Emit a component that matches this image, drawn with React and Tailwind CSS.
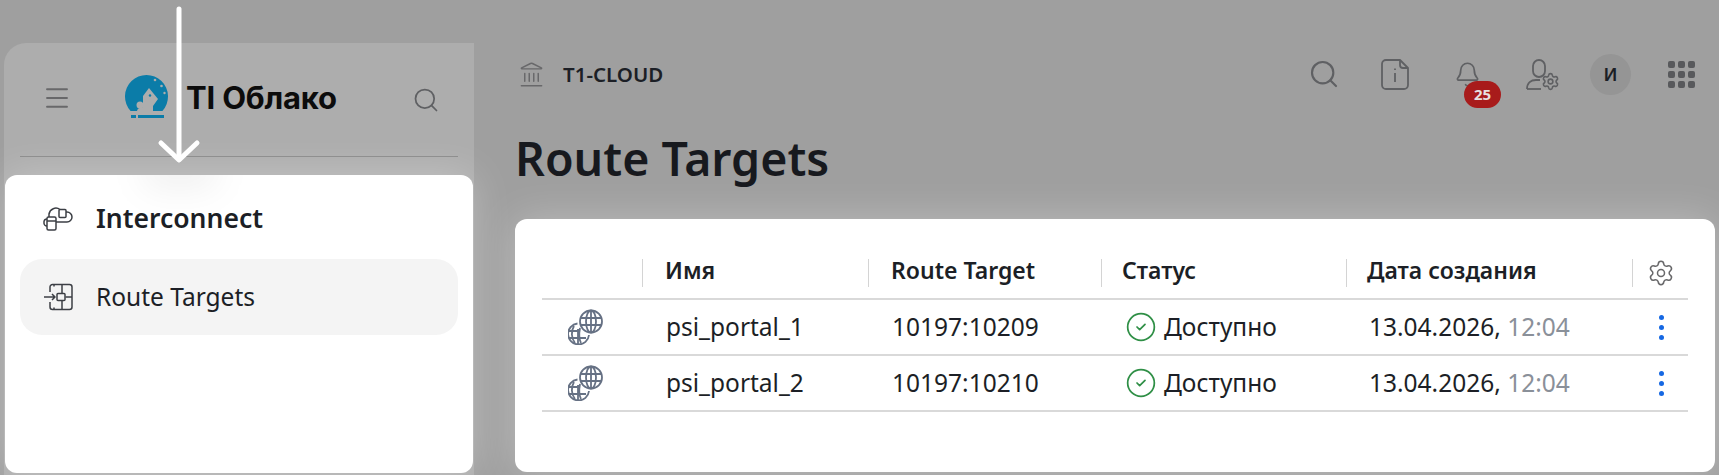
import { Menu, Search, Landmark, Bell, Settings, CircleCheck } from 'lucide-react'

const columns = ['Имя', 'Route Target', 'Статус', 'Дата создания']
const headerPad = ['pl-[22px]', 'pl-[22px]', 'pl-[20px]', 'pl-[20px]']

const rows = [
  { name: 'psi_portal_1', target: '10197:10209' },
  { name: 'psi_portal_2', target: '10197:10210' },
]

const gridCols = 'grid grid-cols-[100px_226px_233px_245px_286px_56px]'

function Logo() {
  return (
    <svg width="44" height="46" viewBox="0 0 44 46">
      <path d="M5.600 36A21.500 21.500 0 1 1 37.400 36Z" fill="#0b7ca8" />
      <path d="M12 36Q12 33 18 32L18 21 24 13 33 24 28 31 28 36Z" fill="#adadad" />
      <circle cx="15" cy="30" r="3.500" fill="#adadad" />
      <circle cx="25" cy="20.500" r="1.200" fill="#0b7ca8" />
      <circle cx="30" cy="5" r="1.300" fill="#adadad" />
      <circle cx="36.500" cy="11" r="1.300" fill="#adadad" />
      <circle cx="39.500" cy="18" r="1.200" fill="#adadad" />
      <rect x="6" y="40" width="5" height="3" fill="#0b7ca8" />
      <rect x="13" y="40" width="26" height="3" fill="#0b7ca8" />
    </svg>
  )
}

function InterconnectIcon() {
  return (
    <svg width="30" height="28" viewBox="0 0 30 28" fill="none" stroke="#3c3f45" strokeWidth="1.500" strokeLinejoin="round">
      <path d="M6 12V9a7 7 0 0 1 11-4.500" />
      <path d="M23 7h1a5 5 0 0 1 0 10H13" />
      <rect x="16" y="4.500" width="7" height="8" rx="1" />
      <rect x="4" y="12" width="9" height="13" rx="1.500" />
      <path d="M4 16h9" />
      <path d="M4 14a3 3 0 0 0-3 2.500v2A3 3 0 0 0 4 21" />
    </svg>
  )
}

function RouteIcon() {
  return (
    <svg width="30" height="28" viewBox="0 0 30 28" fill="none" stroke="#3c3f45" strokeWidth="1.500" strokeLinejoin="round">
      <path d="M7 9V4a2.500 2.500 0 0 1 2.500-2.500h17A2.500 2.500 0 0 1 29 4v20a2.500 2.500 0 0 1-2.500 2.500h-17A2.500 2.500 0 0 1 7 24v-5" />
      <path d="M19 2v8.500M19 17.500V26M22.500 14H29M11 1.500v2M11 24.500v2" />
      <rect x="14" y="10.500" width="8" height="7" rx="1" />
      <path d="M1 14h11M9 11l3 3-3 3" />
    </svg>
  )
}

function Globes() {
  return (
    <svg width="36" height="36" viewBox="0 0 36 36" fill="none" stroke="#667184" strokeWidth="1.800">
      <circle cx="23" cy="12.500" r="11" />
      <ellipse cx="23" cy="12.500" rx="5" ry="11" />
      <path d="M12.500 9h21M12.500 16h21M23 1.500v22" />
      <path d="M9.500 14.500a10.500 10.500 0 1 0 11.500 11.500" />
      <path d="M6 17c-3 5-3 12 1 17M12 19c-1 5-1 11 1 15M1 22h9M1 29h17M10 20v15" />
    </svg>
  )
}

function DocInfo() {
  return (
    <svg width="28" height="31" viewBox="0 0 28 31" fill="none" stroke="#5f6063" strokeWidth="1.800" strokeLinejoin="round">
      <path d="M5 1h14l8 8v17a4 4 0 0 1-4 4H5a4 4 0 0 1-4-4V5a4 4 0 0 1 4-4Z" />
      <path d="M19 1v5a3 3 0 0 0 3 3h5" />
      <path d="M14 14v9" />
      <path d="M14 9.500v1.500" />
    </svg>
  )
}

function UserGear() {
  return (
    <div className="relative w-[32px] h-[31px]">
      <svg width="32" height="31" viewBox="0 0 32 31" fill="none" stroke="#5f6063" strokeWidth="1.800">
        <rect x="7" y="1" width="12" height="17" rx="6" />
        <path d="M1 30c0-6 4-9 9-9h4" />
        <path d="M1 30h14" />
      </svg>
      <Settings size={19} strokeWidth={2} className="absolute right-[-2px] bottom-[-1px] text-[#5f6063]" />
    </div>
  )
}

function AppsGrid() {
  return (
    <div className="grid grid-cols-3 gap-[3px]">
      {Array.from({ length: 9 }).map((_, i) => (
        <div key={i} className="w-[7px] h-[7px] rounded-[2px] bg-[#58595c]" />
      ))}
    </div>
  )
}

function Dots() {
  return (
    <div className="flex flex-col gap-[5px]">
      <div className="w-[5px] h-[5px] rounded-full bg-[#1668e3]" />
      <div className="w-[5px] h-[5px] rounded-full bg-[#1668e3]" />
      <div className="w-[5px] h-[5px] rounded-full bg-[#1668e3]" />
    </div>
  )
}

export default function App() {
  return (
    <div className="relative flex w-[1719px] h-[475px] overflow-hidden bg-[#9f9f9f] font-['Noto_Sans',sans-serif] text-[#1c1f26]">
      {/* Sidebar */}
      <aside className="ml-[4px] mt-[43px] w-[470px] h-[432px] shrink-0 rounded-tl-[22px] bg-[#adadad] flex flex-col">
        <div className="mx-[16px] h-[114px] shrink-0 border-b border-[#8a8a8a] flex items-center">
          <Menu size={30} strokeWidth={1.500} className="ml-[22px] text-[#68686a] -mt-[3px]" />
          <div className="ml-[53px] flex items-center gap-[17px] -mt-[4px]">
            <Logo />
            <span className="font-['Inter',sans-serif] font-bold text-[31px] leading-none text-[#0c0c0c] tracking-[-0.2px]">TI Облако</span>
          </div>
          <Search size={28} strokeWidth={1.500} className="ml-[75px] text-[#5f6063]" />
        </div>

        <div className="relative mt-[18px] ml-[1px] mr-[1px] h-[298px] overflow-hidden rounded-[12px] bg-white shadow-[0_0_40px_rgba(255,255,255,0.3)] px-[15px]">
          <div className="absolute left-[135px] top-[-24px] w-[80px] h-[40px] rounded-full bg-black/5 blur-lg" />
          <div className="flex items-center h-[87px] pl-[23px] gap-[23px]">
            <InterconnectIcon />
            <span className="text-[26.500px] font-semibold leading-none">Interconnect</span>
          </div>
          <div className="flex items-center h-[76px] -mt-[3px] rounded-[22px] bg-[#f4f4f4] pl-[23px] gap-[23px]">
            <RouteIcon />
            <span className="text-[24.500px] leading-none">Route Targets</span>
          </div>
        </div>
      </aside>

      {/* Main */}
      <main className="flex-1 min-w-0 pl-[41px] pr-[4px]">
        <header className="mt-[54px] h-[40px] flex items-center">
          <Landmark size={27} strokeWidth={1.300} className="ml-[3px] text-[#68686a]" />
          <span className="ml-[18px] text-[20.500px] font-semibold leading-none">T1-CLOUD</span>
          <div className="ml-auto flex items-center">
            <Search size={32} strokeWidth={1.600} className="text-[#5f6063]" />
            <div className="ml-[41px]"><DocInfo /></div>
            <div className="relative ml-[45px] mr-[45px]">
              <Bell size={27} strokeWidth={1.500} className="text-[#5f6063]" />
              <span className="absolute left-[10px] top-[20px] w-[37px] h-[27px] rounded-full bg-[#a81b1b] text-[#e8e0e0] text-[15px] font-bold leading-none flex items-center justify-center">25</span>
            </div>
            <UserGear />
            <div className="ml-[32px] w-[41px] h-[41px] rounded-full bg-[#959595] flex items-center justify-center text-[18px] font-semibold">И</div>
            <div className="ml-[37px] mr-[20px]"><AppsGrid /></div>
          </div>
        </header>

        <h1 className="mt-[38px] text-[46.500px] font-semibold leading-[52px] text-[#17191e]">Route Targets</h1>

        <section className="mt-[35px] h-[253px] rounded-[12px] bg-white shadow-[0_0_40px_rgba(255,255,255,0.3)] px-[27px] pt-[40px]">
          <div className={`${gridCols} h-[41px] pb-[14px] border-b-2 border-[#d9d9d9]`}>
            <div />
            {columns.map((c, i) => (
              <div key={c} className={`border-l border-[#d4d4d4] ${headerPad[i]} pb-[5px] flex items-center text-[23px] font-semibold leading-none`}>{c}</div>
            ))}
            <div className="border-l border-[#d4d4d4] pl-[14px] flex items-center">
              <Settings size={28} strokeWidth={1.300} className="text-[#68686a]" />
            </div>
          </div>

          {rows.map(r => (
            <div key={r.name} className={`${gridCols} h-[56px] border-b-2 border-[#d9d9d9] items-center text-[24.500px] leading-none`}>
              <div className="pl-[26px]"><Globes /></div>
              <div className="pl-[24px]">{r.name}</div>
              <div className="pl-[24px]">{r.target}</div>
              <div className="pl-[24px] flex items-center gap-[7px]">
                <CircleCheck size={32} strokeWidth={1.300} className="text-[#2f8f46]" />
                <span>Доступно</span>
              </div>
              <div className="pl-[23px]">13.04.2026, <span className="text-[#8a9099]">12:04</span></div>
              <div className="pl-[27px]"><Dots /></div>
            </div>
          ))}
        </section>
      </main>

      {/* Arrow over the page */}
      <svg className="absolute left-[155px] top-0" width="50" height="170" viewBox="0 0 50 170" fill="none" stroke="#ffffff" strokeWidth="5" strokeLinecap="round" strokeLinejoin="round">
        <path d="M24 9v150" />
        <path d="M6 143l18 17 18-17" />
      </svg>
    </div>
  )
}
